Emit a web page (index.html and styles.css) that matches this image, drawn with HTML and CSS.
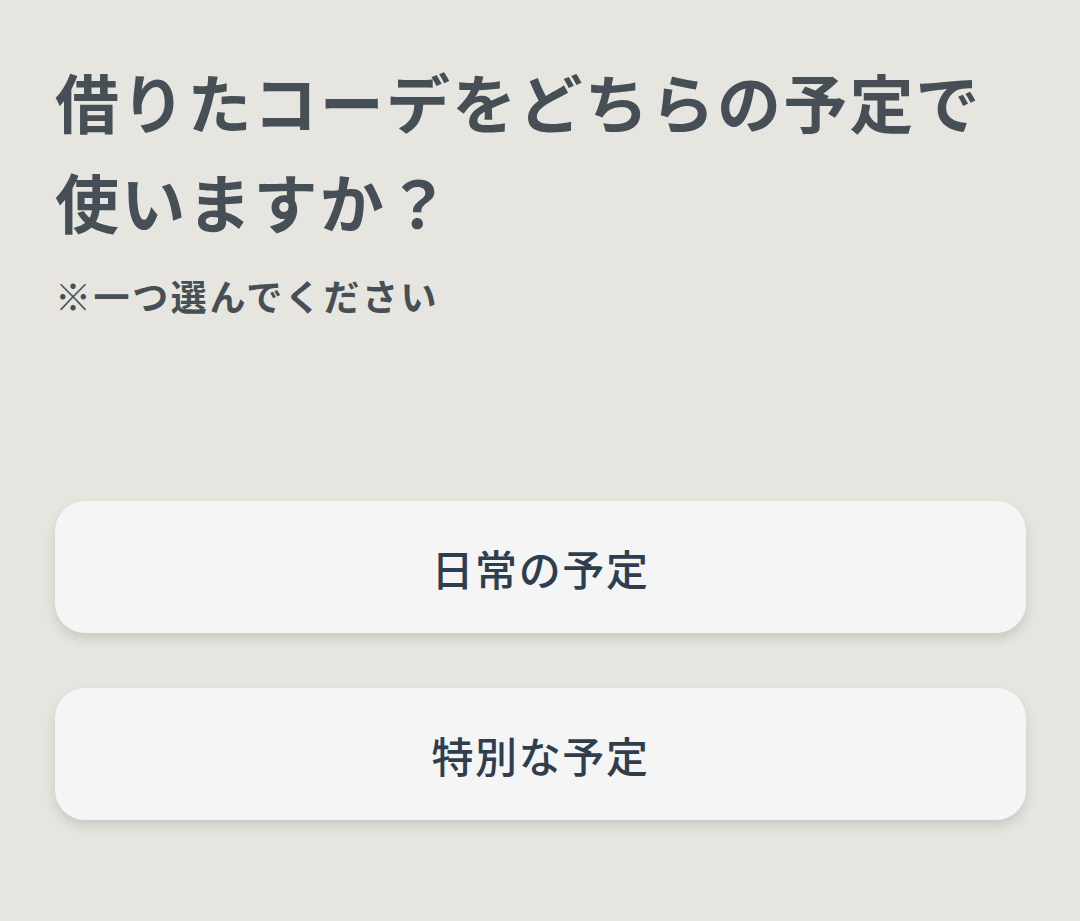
FILE: index.html
```html
<!DOCTYPE html>
<html lang="ja">
<head>
<meta charset="utf-8">
<link rel="stylesheet" href="styles.css">
</head>
<body>
<main class="page">
  <h1 class="title">借りたコーデをどちらの予定で使いますか？</h1>
  <p class="note">※一つ選んでください</p>
  <div class="options">
    <button class="option">日常の予定</button>
    <button class="option">特別な予定</button>
  </div>
</main>
</body>
</html>
```
FILE: styles.css
```css
html, body {
  margin: 0;
  padding: 0;
  background: #e6e5df;
}
body {
  font-family: "Noto Sans CJK JP", "Noto Sans", sans-serif;
  width: 1080px;
  height: 921px;
  overflow: hidden;
}
.page {
  padding: 50px 54px 0 55px;
}
.title {
  margin: 0;
  font-size: 64px;
  line-height: 100px;
  font-weight: 700;
  color: #454f55;
  letter-spacing: 2.2px;
  width: 960px;
}
.note {
  margin: 20px 0 0 0;
  font-size: 36px;
  line-height: 50px;
  font-weight: 700;
  color: #454f55;
  letter-spacing: 2.6px;
}
.options {
  margin-top: 181px;
  display: flex;
  flex-direction: column;
  gap: 55px;
}
.option {
  height: 132px;
  width: 971px;
  border: none;
  border-radius: 30px;
  background: #f5f5f5;
  box-shadow: 0 6px 12px rgba(0, 0, 0, 0.12);
  font-family: "Noto Sans CJK JP", sans-serif;
  font-size: 42px;
  font-weight: 500;
  color: #2f3e4f;
  letter-spacing: 1.6px;
  padding: 0;
}
```
